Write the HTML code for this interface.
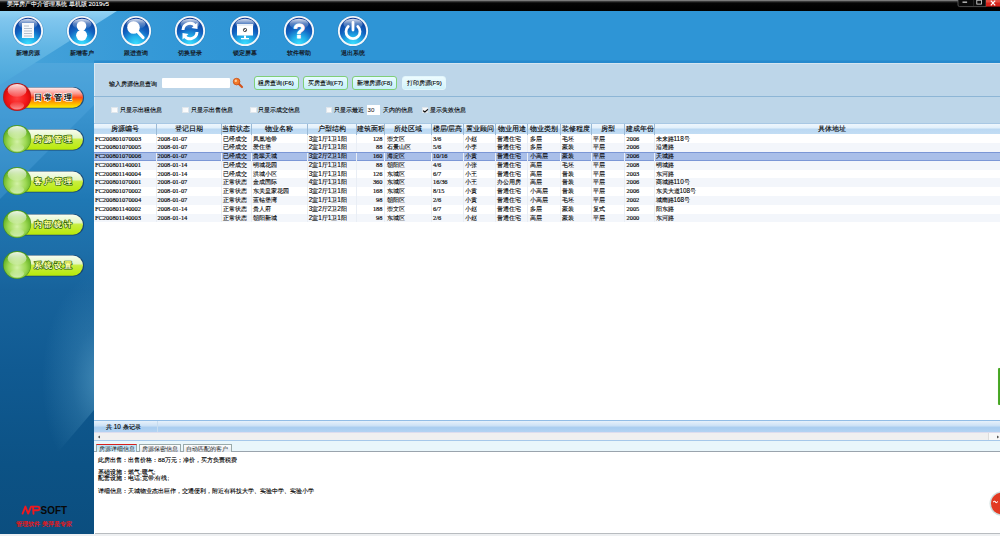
<!DOCTYPE html>
<html><head><meta charset="utf-8">
<style>
*{margin:0;padding:0;box-sizing:border-box}
html,body{width:1000px;height:536px;overflow:hidden;background:#fff;font-family:"Liberation Sans",sans-serif;}
.abs{position:absolute}
#bg{left:0;top:0}
#title{left:0;top:0;width:1000px;height:10.6px;background:linear-gradient(#9a9a9a 0,#3a3a3a 1.5px,#050505 3px,#000 100%);}
#title .t{left:7px;top:0px;font-size:6.25px;color:#fff;white-space:nowrap;line-height:7px;-webkit-text-stroke:0.1px #fff}
.ico{position:absolute;top:15.3px;width:32px;height:32px}
.lbl{position:absolute;top:49px;width:60px;text-align:center;font-size:6.2px;line-height:7px;color:#14202c;font-weight:bold;white-space:nowrap}
#main{left:94px;top:63px;width:906px;height:473px;background:#fff;overflow:hidden}
#panel{left:0;top:0;width:906px;height:61px;background:#bdd6e9;border-left:1px solid #d9e8f3;border-top:1px solid #d4e4f0}
#sep{left:0;top:33px;width:906px;height:1px;background:#8db6d6}
.txt{position:absolute;font-size:6.3px;line-height:8px;color:#000;white-space:nowrap;-webkit-text-stroke:0.12px #000}
#q{left:67.6px;top:15px;width:68px;height:9.6px;background:#fff;border-radius:1px}
.btn{position:absolute;top:13px;height:13.6px;border:1.3px solid #7fcf78;border-radius:3px;background:linear-gradient(#e8fcff,#c6eff9);font-size:6.2px;line-height:11px;text-align:center;color:#000;white-space:nowrap;-webkit-text-stroke:0.1px #000}
.btn.nb{border-color:#e2f6fb;background:linear-gradient(#eefcff,#cff2fa)}
.cb{position:absolute;top:43.8px;width:6.6px;height:6.6px;background:linear-gradient(135deg,#f4f6f8,#fff);border:0.6px solid #dfe6ec}
#n30{left:272.6px;top:42px;width:13.4px;height:10px;background:#fff;font-size:6.2px;line-height:10px;padding-left:1px;color:#111}
#thead{left:0;top:60.4px;width:906px;height:11.1px;background:linear-gradient(#eef6fd 0,#e2f0fb 38%,#bcd9f3 52%,#c2ddf4 100%);border-top:0.5px solid #a8c8e4}
.th{position:absolute;top:0;height:10.8px;font-size:6.5px;line-height:10px;text-align:center;color:#000;-webkit-text-stroke:0.12px #000;border-right:1px solid #9bbad6;white-space:nowrap;overflow:hidden}
.tr{position:absolute;left:0;width:906px;height:8.78px}
.tr.alt{background:#f3f6fb}
.tr.sel{background:#a9bfe9;border-top:1px solid #7b97d6;border-bottom:1px solid #7b97d6}
.td{position:absolute;top:0;height:8.78px;border-right:0.6px solid #e9eef5;font-family:"Liberation Serif",serif;font-size:6.4px;line-height:8.78px;padding-left:1px;color:#000;white-space:nowrap;overflow:hidden;-webkit-text-stroke:0.15px #000}
.tr.sel .td{line-height:6.78px}
.td.cj{font-family:"Liberation Sans",sans-serif;font-size:6.4px;-webkit-text-stroke:0.1px #000}
.td.r{text-align:right;padding-right:2px}
#status{left:0;top:357px;width:906px;height:12px;background:linear-gradient(#e6f1fb 0,#cfe3f6 40%,#a9cdf0 60%,#b3d3f2 100%);border-top:1px solid #92bde6}
#scroll{left:0;top:369px;width:906px;height:8px;background:#f0f0f0;border-top:0.5px solid #dde;}
#tabs{left:0;top:377px;width:906px;height:12.4px;background:#e9f6fb;border-top:1px solid #a6c8ea;border-bottom:1.2px solid #9aa4ad}
.tab{position:absolute;top:3px;height:8.4px;background:linear-gradient(#fdfdfd,#e2e8ee);border:0.6px solid #9aa;border-bottom:none;font-size:6.3px;line-height:8px;padding-left:1.5px;color:#111;white-space:nowrap}
#detail{left:1px;top:389.4px;width:905px;height:81.4px;background:#fff;border-bottom:1.4px solid #b8bcc0}
.dl{position:absolute;left:3px;font-size:6.25px;line-height:7px;color:#000;white-space:nowrap;-webkit-text-stroke:0.12px #000}
</style></head><body>
<svg id="bg" class="abs" width="1000" height="536" viewBox="0 0 1000 536">
  <defs>
    <radialGradient id="icog" cx="0.5" cy="1.0" r="1.0">
      <stop offset="0" stop-color="#3ee0ff"/><stop offset="0.3" stop-color="#22b0ea"/><stop offset="0.6" stop-color="#1262c0"/><stop offset="1" stop-color="#0a3590"/>
    </radialGradient>
    <linearGradient id="gloss" x1="0" y1="0" x2="0" y2="1">
      <stop offset="0" stop-color="#fff" stop-opacity=".85"/><stop offset="0.45" stop-color="#fff" stop-opacity=".35"/><stop offset="1" stop-color="#fff" stop-opacity="0.02"/>
    </linearGradient>
    <linearGradient id="glossB" x1="0" y1="0" x2="0" y2="1">
      <stop offset="0" stop-color="#fff" stop-opacity=".9"/><stop offset="1" stop-color="#fff" stop-opacity="0.15"/>
    </linearGradient>
    <linearGradient id="glossU" x1="0" y1="0" x2="0" y2="1">
      <stop offset="0" stop-color="#fff" stop-opacity="0"/><stop offset="1" stop-color="#fff" stop-opacity="0.55"/>
    </linearGradient>
    <linearGradient id="pillR" x1="0" y1="0" x2="0" y2="1">
      <stop offset="0" stop-color="#fff0f0"/><stop offset="0.3" stop-color="#fb9a90"/><stop offset="0.5" stop-color="#ff4a18"/><stop offset="0.7" stop-color="#ff9a00"/><stop offset="1" stop-color="#fff000"/>
    </linearGradient>
    <linearGradient id="pillG" x1="0" y1="0" x2="0" y2="1">
      <stop offset="0" stop-color="#f8fdf0"/><stop offset="0.4" stop-color="#e4f6c4"/><stop offset="0.5" stop-color="#c8ee40"/><stop offset="1" stop-color="#b8ea08"/>
    </linearGradient>
    <radialGradient id="ballR" cx="0.5" cy="0.55" r="0.55">
      <stop offset="0" stop-color="#ff4040"/><stop offset="0.7" stop-color="#f01414"/><stop offset="1" stop-color="#c80a0a"/>
    </radialGradient>
    <radialGradient id="ballG" cx="0.5" cy="0.6" r="0.55">
      <stop offset="0" stop-color="#d4f2a8"/><stop offset="0.6" stop-color="#9cd852"/><stop offset="1" stop-color="#62b022"/>
    </radialGradient>
    <linearGradient id="sideg" gradientUnits="userSpaceOnUse" x1="0" y1="63" x2="0" y2="536">
      <stop offset="0" stop-color="#4aa3d8"/>
      <stop offset="0.1" stop-color="#3a94cf"/>
      <stop offset="0.29" stop-color="#1f78b4"/>
      <stop offset="0.4" stop-color="#1d6ea8"/>
      <stop offset="0.48" stop-color="#17639c"/>
      <stop offset="0.65" stop-color="#105a92"/>
      <stop offset="0.85" stop-color="#0c5285"/>
      <stop offset="1" stop-color="#0b4e7f"/>
    </linearGradient>
    <linearGradient id="hdrh" gradientUnits="userSpaceOnUse" x1="0" y1="0" x2="300" y2="0">
      <stop offset="0" stop-color="#4aa5da"/><stop offset="1" stop-color="#2e95d6" stop-opacity="0"/>
    </linearGradient>
    <radialGradient id="glow" gradientUnits="userSpaceOnUse" cx="102" cy="380" r="80" gradientTransform="translate(102 380) scale(0.75 1.35) translate(-102 -380)">
      <stop offset="0" stop-color="#6ab0d4" stop-opacity=".55"/><stop offset="0.5" stop-color="#6ab0d4" stop-opacity=".2"/><stop offset="1" stop-color="#6ab0d4" stop-opacity="0"/>
    </radialGradient>
    <linearGradient id="txtG" x1="0" y1="0" x2="0" y2="1">
      <stop offset="0" stop-color="#ffff60"/><stop offset="1" stop-color="#ffffff"/>
    </linearGradient>
    <linearGradient id="triA" gradientUnits="userSpaceOnUse" x1="0" y1="10" x2="0" y2="85">
      <stop offset="0" stop-color="#94d4f4"/><stop offset="0.12" stop-color="#80c6ee"/><stop offset="0.5" stop-color="#62b6e4"/><stop offset="1" stop-color="#4aa6da"/>
    </linearGradient>
  </defs>
  <rect x="0" y="10" width="1000" height="53" fill="#2e95d6"/>
  <rect x="0" y="10" width="300" height="53" fill="url(#hdrh)"/>
  <rect x="94" y="60.5" width="906" height="2.5" fill="#1f7fc6" opacity=".55"/>
  <rect x="0" y="534" width="94" height="2" fill="#eef0f2"/>
  <rect x="0" y="63" width="94" height="471" fill="url(#sideg)"/>
  <polygon points="0,63 136,63 0,199" fill="#5fb0e6" opacity="0.28"/>
  <polygon points="94,230 94,410 0,520 0,230" fill="url(#glow)"/>
  <polygon points="0,10 118.5,10 0,85" fill="url(#triA)"/>
</svg>
<div id="title" class="abs"><div class="t abs">美萍房产中介管理系统 单机版 2019v5</div>
  <svg class="abs" style="left:957px;top:0" width="43" height="8" viewBox="0 0 43 8">
    <path d="M1 0 V5 Q1 6.6 2.6 6.6 H29 V0" fill="#0a0a0a" stroke="#6a6a6a" stroke-width="0.7"/>
    <line x1="16.6" y1="0" x2="16.6" y2="6.4" stroke="#444" stroke-width="0.5"/>
    <rect x="5.5" y="1.6" width="4.6" height="1.1" fill="#f0f0f0"/>
    <rect x="19.8" y="0.2" width="4.6" height="3.9" fill="none" stroke="#e8e8e8" stroke-width="0.8"/>
    <path d="M29 0 H43 V6.6 H29Z" fill="#d8241c"/>
    <path d="M29 0 H43 V2.5 H29Z" fill="#ee6a5a" opacity=".6"/>
    <path d="M33.8 0.6 L38.2 5.4 M38.2 0.6 L33.8 5.4" stroke="#fff" stroke-width="1.2"/>
  </svg>
</div>

<!-- header icons -->
<svg class="ico" style="left:12.3px" viewBox="0 0 32 32"><circle cx="16" cy="16" r="15.6" fill="#1b6aa8" opacity=".5"/><circle cx="16" cy="16" r="15.1" fill="#f2f6fa"/><circle cx="16" cy="16" r="13.2" fill="url(#icog)"/><ellipse cx="16" cy="9" rx="9.6" ry="5.2" fill="url(#gloss)"/><rect x="10" y="8" width="12" height="15" fill="#f6f8fb"/><g stroke="#9aa8b8" stroke-width="0.7"><line x1="12" y1="11" x2="17" y2="11"/><line x1="12" y1="13.5" x2="20" y2="13.5"/><line x1="12" y1="16" x2="20" y2="16"/><line x1="12" y1="18.5" x2="20" y2="18.5"/><line x1="12" y1="21" x2="20" y2="21"/></g></svg>
<div class="lbl" style="left:-1.7px">新增房源</div>
<svg class="ico" style="left:66.3px" viewBox="0 0 32 32"><circle cx="16" cy="16" r="15.6" fill="#1b6aa8" opacity=".5"/><circle cx="16" cy="16" r="15.1" fill="#f2f6fa"/><circle cx="16" cy="16" r="13.2" fill="url(#icog)"/><ellipse cx="16" cy="9" rx="9.6" ry="5.2" fill="url(#gloss)"/><circle cx="15.5" cy="11" r="4.8" fill="#fff"/><circle cx="15.6" cy="20.3" r="5.5" fill="#fff"/></svg>
<div class="lbl" style="left:52.3px">新增客户</div>
<svg class="ico" style="left:120.3px" viewBox="0 0 32 32"><circle cx="16" cy="16" r="15.6" fill="#1b6aa8" opacity=".5"/><circle cx="16" cy="16" r="15.1" fill="#f2f6fa"/><circle cx="16" cy="16" r="13.2" fill="url(#icog)"/><ellipse cx="16" cy="9" rx="9.6" ry="5.2" fill="url(#gloss)"/><circle cx="13.5" cy="12.5" r="6.3" fill="#fff"/><line x1="17" y1="16" x2="23" y2="22.5" stroke="#fff" stroke-width="3.2" stroke-linecap="round"/></svg>
<div class="lbl" style="left:106.3px">跟进查询</div>
<svg class="ico" style="left:174.3px" viewBox="0 0 32 32"><circle cx="16" cy="16" r="15.6" fill="#1b6aa8" opacity=".5"/><circle cx="16" cy="16" r="15.1" fill="#f2f6fa"/><circle cx="16" cy="16" r="13.2" fill="url(#icog)"/><ellipse cx="16" cy="9" rx="9.6" ry="5.2" fill="url(#gloss)"/><path d="M9 15 A7 7 0 0 1 21.5 11" stroke="#fff" stroke-width="3" fill="none"/><path d="M23.5 7.5 L23.5 14 L17.5 13Z" fill="#fff"/><path d="M23 17 A7 7 0 0 1 10.5 21" stroke="#fff" stroke-width="3" fill="none"/><path d="M8.5 24.5 L8.5 18 L14.5 19Z" fill="#fff"/></svg>
<div class="lbl" style="left:160.3px">切换登录</div>
<svg class="ico" style="left:228.8px" viewBox="0 0 32 32"><circle cx="16" cy="16" r="15.6" fill="#1b6aa8" opacity=".5"/><circle cx="16" cy="16" r="15.1" fill="#f2f6fa"/><circle cx="16" cy="16" r="13.2" fill="url(#icog)"/><ellipse cx="16" cy="9" rx="9.6" ry="5.2" fill="url(#gloss)"/><rect x="8" y="9" width="16" height="11.5" fill="#fff"/><rect x="8" y="9" width="16" height="2" fill="#e8eef5"/><circle cx="16" cy="15" r="1.7" fill="none" stroke="#333" stroke-width="0.8"/><line x1="15" y1="14" x2="17" y2="16" stroke="#333" stroke-width="0.6"/><rect x="15" y="20.5" width="2" height="2.5" fill="#fff"/><rect x="12" y="23" width="8" height="1.3" fill="#fff"/></svg>
<div class="lbl" style="left:214.8px">锁定屏幕</div>
<svg class="ico" style="left:282.6px" viewBox="0 0 32 32"><circle cx="16" cy="16" r="15.6" fill="#1b6aa8" opacity=".5"/><circle cx="16" cy="16" r="15.1" fill="#f2f6fa"/><circle cx="16" cy="16" r="13.2" fill="url(#icog)"/><ellipse cx="16" cy="9" rx="9.6" ry="5.2" fill="url(#gloss)"/><text x="16" y="22.9" text-anchor="middle" font-family="Liberation Sans" font-weight="bold" font-size="20" fill="#fff" stroke="#fff" stroke-width="0.8">?</text></svg>
<div class="lbl" style="left:268.6px">软件帮助</div>
<svg class="ico" style="left:336.8px" viewBox="0 0 32 32"><circle cx="16" cy="16" r="15.6" fill="#1b6aa8" opacity=".5"/><circle cx="16" cy="16" r="15.1" fill="#f2f6fa"/><circle cx="16" cy="16" r="13.2" fill="url(#icog)"/><ellipse cx="16" cy="9" rx="9.6" ry="5.2" fill="url(#gloss)"/><path d="M11.2 11.5 A7 7 0 1 0 20.8 11.5" stroke="#fff" stroke-width="2.8" fill="none" stroke-linecap="round"/><line x1="16" y1="7.5" x2="16" y2="15" stroke="#fff" stroke-width="2.8" stroke-linecap="round"/></svg>
<div class="lbl" style="left:322.8px">退出系统</div>

<!-- sidebar buttons -->
<svg class="abs" style="left:0;top:81.2px" width="94" height="32" viewBox="0 0 94 32"><rect x="15" y="5.9" width="69" height="21.6" rx="10.8" fill="#173e66" opacity=".85"/><rect x="15.5" y="6.4" width="67.5" height="20.4" rx="10.2" fill="url(#pillR)"/><circle cx="17.1" cy="16" r="14.1" fill="#a01010" opacity=".8"/><circle cx="17.1" cy="16" r="13.5" fill="url(#ballR)"/><ellipse cx="17.1" cy="9.4" rx="9.4" ry="6.4" fill="url(#glossB)"/><ellipse cx="17.1" cy="24.5" rx="7" ry="4" fill="url(#glossU)"/><text x="54.2" y="19.2" text-anchor="middle" font-family="Liberation Sans" font-weight="bold" font-size="8" letter-spacing="2.1" fill="#111" stroke="#fff" stroke-width="1.4" paint-order="stroke" stroke-linejoin="round">日常管理</text></svg>
<svg class="abs" style="left:0;top:123.1px" width="94" height="32" viewBox="0 0 94 32"><rect x="15" y="5.9" width="69" height="21.6" rx="10.8" fill="#173e66" opacity=".85"/><rect x="15.5" y="6.4" width="67.5" height="20.4" rx="10.2" fill="url(#pillG)"/><circle cx="17.1" cy="16" r="14.1" fill="#3d8a12" opacity=".8"/><circle cx="17.1" cy="16" r="13.5" fill="url(#ballG)"/><ellipse cx="17.1" cy="9.4" rx="9.4" ry="6.4" fill="url(#glossB)"/><ellipse cx="17.1" cy="24.5" rx="7" ry="4" fill="url(#glossU)"/><text x="54.2" y="19.2" text-anchor="middle" font-family="Liberation Sans" font-weight="bold" font-size="8" letter-spacing="2.1" fill="url(#txtG)" stroke="#245e08" stroke-width="1.4" paint-order="stroke" stroke-linejoin="round">房源管理</text></svg>
<svg class="abs" style="left:0;top:165.0px" width="94" height="32" viewBox="0 0 94 32"><rect x="15" y="5.9" width="69" height="21.6" rx="10.8" fill="#173e66" opacity=".85"/><rect x="15.5" y="6.4" width="67.5" height="20.4" rx="10.2" fill="url(#pillG)"/><circle cx="17.1" cy="16" r="14.1" fill="#3d8a12" opacity=".8"/><circle cx="17.1" cy="16" r="13.5" fill="url(#ballG)"/><ellipse cx="17.1" cy="9.4" rx="9.4" ry="6.4" fill="url(#glossB)"/><ellipse cx="17.1" cy="24.5" rx="7" ry="4" fill="url(#glossU)"/><text x="54.2" y="19.2" text-anchor="middle" font-family="Liberation Sans" font-weight="bold" font-size="8" letter-spacing="2.1" fill="url(#txtG)" stroke="#245e08" stroke-width="1.4" paint-order="stroke" stroke-linejoin="round">客户管理</text></svg>
<svg class="abs" style="left:0;top:207.5px" width="94" height="32" viewBox="0 0 94 32"><rect x="15" y="5.9" width="69" height="21.6" rx="10.8" fill="#173e66" opacity=".85"/><rect x="15.5" y="6.4" width="67.5" height="20.4" rx="10.2" fill="url(#pillG)"/><circle cx="17.1" cy="16" r="14.1" fill="#3d8a12" opacity=".8"/><circle cx="17.1" cy="16" r="13.5" fill="url(#ballG)"/><ellipse cx="17.1" cy="9.4" rx="9.4" ry="6.4" fill="url(#glossB)"/><ellipse cx="17.1" cy="24.5" rx="7" ry="4" fill="url(#glossU)"/><text x="54.2" y="19.2" text-anchor="middle" font-family="Liberation Sans" font-weight="bold" font-size="8" letter-spacing="2.1" fill="url(#txtG)" stroke="#245e08" stroke-width="1.4" paint-order="stroke" stroke-linejoin="round">内部统计</text></svg>
<svg class="abs" style="left:0;top:248.8px" width="94" height="32" viewBox="0 0 94 32"><rect x="15" y="5.9" width="69" height="21.6" rx="10.8" fill="#173e66" opacity=".85"/><rect x="15.5" y="6.4" width="67.5" height="20.4" rx="10.2" fill="url(#pillG)"/><circle cx="17.1" cy="16" r="14.1" fill="#3d8a12" opacity=".8"/><circle cx="17.1" cy="16" r="13.5" fill="url(#ballG)"/><ellipse cx="17.1" cy="9.4" rx="9.4" ry="6.4" fill="url(#glossB)"/><ellipse cx="17.1" cy="24.5" rx="7" ry="4" fill="url(#glossU)"/><text x="54.2" y="19.2" text-anchor="middle" font-family="Liberation Sans" font-weight="bold" font-size="8" letter-spacing="2.1" fill="url(#txtG)" stroke="#245e08" stroke-width="1.4" paint-order="stroke" stroke-linejoin="round">系统设置</text></svg>

<div id="main" class="abs">
  <div id="panel" class="abs"></div>
  <div id="sep" class="abs"></div>
  <div class="txt" style="left:15px;top:17px">输入房源信息查询</div>
  <div id="q" class="abs"></div>
  <svg class="abs" style="left:138px;top:14px" width="12" height="12" viewBox="0 0 12 12">
    <line x1="5" y1="5" x2="10" y2="10" stroke="#d2531c" stroke-width="2.2" stroke-linecap="round"/>
    <circle cx="4.6" cy="4.6" r="3.3" fill="#f27a2a" stroke="#c84a10" stroke-width="0.8"/>
    <circle cx="3.8" cy="3.8" r="1.2" fill="#ffd0a0"/>
  </svg>
  <div class="btn" style="left:159.6px;width:45px">租房查询(F6)</div>
  <div class="btn" style="left:209px;width:45px">买房查询(F7)</div>
  <div class="btn" style="left:258px;width:45.4px">新增房源(F8)</div>
  <div class="btn nb" style="left:308px;width:44.4px">打印房源(F9)</div>

  <div class="cb" style="left:17px"></div><div class="txt" style="left:26px;top:43px">只显示出租信息</div>
  <div class="cb" style="left:88px"></div><div class="txt" style="left:97px;top:43px">只显示出售信息</div>
  <div class="cb" style="left:156px"></div><div class="txt" style="left:164.4px;top:43px">只显示成交信息</div>
  <div class="cb" style="left:231.6px"></div><div class="txt" style="left:240px;top:43px">只显示最近</div>
  <div id="n30" class="abs">30</div>
  <div class="txt" style="left:289px;top:43px">天内的信息</div>
  <div class="cb" style="left:327.6px"></div>
  <svg class="abs" style="left:327.6px;top:43.5px" width="7" height="7" viewBox="0 0 7 7"><path d="M1.5 3.9 L2.9 5 L5.6 2.6" stroke="#111" stroke-width="1.25" fill="none" stroke-linecap="round"/></svg>
  <div class="txt" style="left:336px;top:43px">显示失效信息</div>

  <div id="thead" class="abs">
<div class="th" style="left:0.0px;width:62.5px">房源编号</div>
<div class="th" style="left:62.5px;width:65.0px">登记日期</div>
<div class="th" style="left:127.5px;width:30.5px">当前状态</div>
<div class="th" style="left:158.0px;width:55.7px">物业名称</div>
<div class="th" style="left:213.7px;width:49.5px">户型结构</div>
<div class="th" style="left:263.2px;width:28.3px">建筑面积</div>
<div class="th" style="left:291.5px;width:46.5px">所处区域</div>
<div class="th" style="left:338.0px;width:32.0px">楼层/层高</div>
<div class="th" style="left:370.0px;width:32.4px">置业顾问</div>
<div class="th" style="left:402.4px;width:32.1px">物业用途</div>
<div class="th" style="left:434.5px;width:32.2px">物业类别</div>
<div class="th" style="left:466.7px;width:31.5px">装修程度</div>
<div class="th" style="left:498.2px;width:33.3px">房型</div>
<div class="th" style="left:531.5px;width:29.0px">建成年份</div>
<div class="th" style="left:560.5px;width:355.5px">具体地址</div>
  </div>
  <div id="tbody">
<div class="tr" style="top:71.50px">
<div class="td" style="left:0.0px;width:62.5px">FC200801070003</div>
<div class="td" style="left:62.5px;width:65.0px">2008-01-07</div>
<div class="td cj" style="left:127.5px;width:30.5px">已经成交</div>
<div class="td cj" style="left:158.0px;width:55.7px">凤凰地带</div>
<div class="td cj" style="left:213.7px;width:49.5px">3室1厅1卫1阳</div>
<div class="td r" style="left:263.2px;width:28.3px">128</div>
<div class="td cj" style="left:291.5px;width:46.5px">崇文区</div>
<div class="td" style="left:338.0px;width:32.0px">3/6</div>
<div class="td cj" style="left:370.0px;width:32.4px">小赵</div>
<div class="td cj" style="left:402.4px;width:32.1px">普通住宅</div>
<div class="td cj" style="left:434.5px;width:32.2px">多层</div>
<div class="td cj" style="left:466.7px;width:31.5px">毛坯</div>
<div class="td cj" style="left:498.2px;width:33.3px">平层</div>
<div class="td" style="left:531.5px;width:29.0px">2006</div>
<div class="td cj" style="left:560.5px;width:355.5px">未来路118号</div>
</div>
<div class="tr alt" style="top:80.28px">
<div class="td" style="left:0.0px;width:62.5px">FC200801070005</div>
<div class="td" style="left:62.5px;width:65.0px">2008-01-07</div>
<div class="td cj" style="left:127.5px;width:30.5px">已经成交</div>
<div class="td cj" style="left:158.0px;width:55.7px">爱住堡</div>
<div class="td cj" style="left:213.7px;width:49.5px">2室1厅1卫1阳</div>
<div class="td r" style="left:263.2px;width:28.3px">88</div>
<div class="td cj" style="left:291.5px;width:46.5px">石景山区</div>
<div class="td" style="left:338.0px;width:32.0px">5/6</div>
<div class="td cj" style="left:370.0px;width:32.4px">小李</div>
<div class="td cj" style="left:402.4px;width:32.1px">普通住宅</div>
<div class="td cj" style="left:434.5px;width:32.2px">多层</div>
<div class="td cj" style="left:466.7px;width:31.5px">豪装</div>
<div class="td cj" style="left:498.2px;width:33.3px">平层</div>
<div class="td" style="left:531.5px;width:29.0px">2006</div>
<div class="td cj" style="left:560.5px;width:355.5px">沿通路</div>
</div>
<div class="tr sel" style="top:89.06px">
<div class="td" style="left:0.0px;width:62.5px">FC200801070006</div>
<div class="td" style="left:62.5px;width:65.0px">2008-01-07</div>
<div class="td cj" style="left:127.5px;width:30.5px">已经成交</div>
<div class="td cj" style="left:158.0px;width:55.7px">贵翠天城</div>
<div class="td cj" style="left:213.7px;width:49.5px">3室2厅2卫1阳</div>
<div class="td r" style="left:263.2px;width:28.3px">160</div>
<div class="td cj" style="left:291.5px;width:46.5px">海淀区</div>
<div class="td" style="left:338.0px;width:32.0px">10/16</div>
<div class="td cj" style="left:370.0px;width:32.4px">小黄</div>
<div class="td cj" style="left:402.4px;width:32.1px">普通住宅</div>
<div class="td cj" style="left:434.5px;width:32.2px">小高层</div>
<div class="td cj" style="left:466.7px;width:31.5px">豪装</div>
<div class="td cj" style="left:498.2px;width:33.3px">平层</div>
<div class="td" style="left:531.5px;width:29.0px">2006</div>
<div class="td cj" style="left:560.5px;width:355.5px">天城路</div>
</div>
<div class="tr alt" style="top:97.84px">
<div class="td" style="left:0.0px;width:62.5px">FC200801140001</div>
<div class="td" style="left:62.5px;width:65.0px">2008-01-14</div>
<div class="td cj" style="left:127.5px;width:30.5px">已经成交</div>
<div class="td cj" style="left:158.0px;width:55.7px">明城花园</div>
<div class="td cj" style="left:213.7px;width:49.5px">2室1厅1卫1阳</div>
<div class="td r" style="left:263.2px;width:28.3px">88</div>
<div class="td cj" style="left:291.5px;width:46.5px">朝阳区</div>
<div class="td" style="left:338.0px;width:32.0px">4/6</div>
<div class="td cj" style="left:370.0px;width:32.4px">小张</div>
<div class="td cj" style="left:402.4px;width:32.1px">普通住宅</div>
<div class="td cj" style="left:434.5px;width:32.2px">高层</div>
<div class="td cj" style="left:466.7px;width:31.5px">毛坯</div>
<div class="td cj" style="left:498.2px;width:33.3px">平层</div>
<div class="td" style="left:531.5px;width:29.0px">2008</div>
<div class="td cj" style="left:560.5px;width:355.5px">明城路</div>
</div>
<div class="tr" style="top:106.62px">
<div class="td" style="left:0.0px;width:62.5px">FC200801140004</div>
<div class="td" style="left:62.5px;width:65.0px">2008-01-14</div>
<div class="td cj" style="left:127.5px;width:30.5px">已经成交</div>
<div class="td cj" style="left:158.0px;width:55.7px">洪城小区</div>
<div class="td cj" style="left:213.7px;width:49.5px">3室1厅1卫1阳</div>
<div class="td r" style="left:263.2px;width:28.3px">126</div>
<div class="td cj" style="left:291.5px;width:46.5px">东城区</div>
<div class="td" style="left:338.0px;width:32.0px">6/7</div>
<div class="td cj" style="left:370.0px;width:32.4px">小王</div>
<div class="td cj" style="left:402.4px;width:32.1px">普通住宅</div>
<div class="td cj" style="left:434.5px;width:32.2px">高层</div>
<div class="td cj" style="left:466.7px;width:31.5px">普装</div>
<div class="td cj" style="left:498.2px;width:33.3px">平层</div>
<div class="td" style="left:531.5px;width:29.0px">2003</div>
<div class="td cj" style="left:560.5px;width:355.5px">东河路</div>
</div>
<div class="tr alt" style="top:115.40px">
<div class="td" style="left:0.0px;width:62.5px">FC200801070001</div>
<div class="td" style="left:62.5px;width:65.0px">2008-01-07</div>
<div class="td cj" style="left:127.5px;width:30.5px">正常状态</div>
<div class="td cj" style="left:158.0px;width:55.7px">金成国际</div>
<div class="td cj" style="left:213.7px;width:49.5px">4室1厅1卫1阳</div>
<div class="td r" style="left:263.2px;width:28.3px">360</div>
<div class="td cj" style="left:291.5px;width:46.5px">东城区</div>
<div class="td" style="left:338.0px;width:32.0px">16/36</div>
<div class="td cj" style="left:370.0px;width:32.4px">小王</div>
<div class="td cj" style="left:402.4px;width:32.1px">办公用房</div>
<div class="td cj" style="left:434.5px;width:32.2px">高层</div>
<div class="td cj" style="left:466.7px;width:31.5px">普装</div>
<div class="td cj" style="left:498.2px;width:33.3px">平层</div>
<div class="td" style="left:531.5px;width:29.0px">2006</div>
<div class="td cj" style="left:560.5px;width:355.5px">商城路110号</div>
</div>
<div class="tr" style="top:124.18px">
<div class="td" style="left:0.0px;width:62.5px">FC200801070002</div>
<div class="td" style="left:62.5px;width:65.0px">2008-01-07</div>
<div class="td cj" style="left:127.5px;width:30.5px">正常状态</div>
<div class="td cj" style="left:158.0px;width:55.7px">东关皇家花园</div>
<div class="td cj" style="left:213.7px;width:49.5px">3室2厅1卫1阳</div>
<div class="td r" style="left:263.2px;width:28.3px">168</div>
<div class="td cj" style="left:291.5px;width:46.5px">东城区</div>
<div class="td" style="left:338.0px;width:32.0px">8/15</div>
<div class="td cj" style="left:370.0px;width:32.4px">小黄</div>
<div class="td cj" style="left:402.4px;width:32.1px">普通住宅</div>
<div class="td cj" style="left:434.5px;width:32.2px">小高层</div>
<div class="td cj" style="left:466.7px;width:31.5px">普装</div>
<div class="td cj" style="left:498.2px;width:33.3px">平层</div>
<div class="td" style="left:531.5px;width:29.0px">2006</div>
<div class="td cj" style="left:560.5px;width:355.5px">东关大道108号</div>
</div>
<div class="tr alt" style="top:132.96px">
<div class="td" style="left:0.0px;width:62.5px">FC200801070004</div>
<div class="td" style="left:62.5px;width:65.0px">2008-01-07</div>
<div class="td cj" style="left:127.5px;width:30.5px">正常状态</div>
<div class="td cj" style="left:158.0px;width:55.7px">蓝钻堡湾</div>
<div class="td cj" style="left:213.7px;width:49.5px">2室1厅1卫1阳</div>
<div class="td r" style="left:263.2px;width:28.3px">98</div>
<div class="td cj" style="left:291.5px;width:46.5px">朝阳区</div>
<div class="td" style="left:338.0px;width:32.0px">2/6</div>
<div class="td cj" style="left:370.0px;width:32.4px">小黄</div>
<div class="td cj" style="left:402.4px;width:32.1px">普通住宅</div>
<div class="td cj" style="left:434.5px;width:32.2px">小高层</div>
<div class="td cj" style="left:466.7px;width:31.5px">毛坯</div>
<div class="td cj" style="left:498.2px;width:33.3px">平层</div>
<div class="td" style="left:531.5px;width:29.0px">2002</div>
<div class="td cj" style="left:560.5px;width:355.5px">城南路168号</div>
</div>
<div class="tr" style="top:141.74px">
<div class="td" style="left:0.0px;width:62.5px">FC200801140002</div>
<div class="td" style="left:62.5px;width:65.0px">2008-01-14</div>
<div class="td cj" style="left:127.5px;width:30.5px">正常状态</div>
<div class="td cj" style="left:158.0px;width:55.7px">贵人府</div>
<div class="td cj" style="left:213.7px;width:49.5px">3室2厅2卫2阳</div>
<div class="td r" style="left:263.2px;width:28.3px">188</div>
<div class="td cj" style="left:291.5px;width:46.5px">崇文区</div>
<div class="td" style="left:338.0px;width:32.0px">6/7</div>
<div class="td cj" style="left:370.0px;width:32.4px">小赵</div>
<div class="td cj" style="left:402.4px;width:32.1px">普通住宅</div>
<div class="td cj" style="left:434.5px;width:32.2px">多层</div>
<div class="td cj" style="left:466.7px;width:31.5px">豪装</div>
<div class="td cj" style="left:498.2px;width:33.3px">复式</div>
<div class="td" style="left:531.5px;width:29.0px">2005</div>
<div class="td cj" style="left:560.5px;width:355.5px">阳东路</div>
</div>
<div class="tr alt" style="top:150.52px">
<div class="td" style="left:0.0px;width:62.5px">FC200801140003</div>
<div class="td" style="left:62.5px;width:65.0px">2008-01-14</div>
<div class="td cj" style="left:127.5px;width:30.5px">正常状态</div>
<div class="td cj" style="left:158.0px;width:55.7px">朝阳新城</div>
<div class="td cj" style="left:213.7px;width:49.5px">2室1厅1卫1阳</div>
<div class="td r" style="left:263.2px;width:28.3px">98</div>
<div class="td cj" style="left:291.5px;width:46.5px">东城区</div>
<div class="td" style="left:338.0px;width:32.0px">2/6</div>
<div class="td cj" style="left:370.0px;width:32.4px">小赵</div>
<div class="td cj" style="left:402.4px;width:32.1px">普通住宅</div>
<div class="td cj" style="left:434.5px;width:32.2px">高层</div>
<div class="td cj" style="left:466.7px;width:31.5px">豪装</div>
<div class="td cj" style="left:498.2px;width:33.3px">平层</div>
<div class="td" style="left:531.5px;width:29.0px">2000</div>
<div class="td cj" style="left:560.5px;width:355.5px">东河路</div>
</div>
  </div>

  <div id="status" class="abs">
    <div class="abs" style="left:62.5px;top:0;width:1px;height:11px;background:#c8ddf0"></div>
    <div class="txt" style="left:12px;top:1.5px">共 10 条记录</div>
  </div>
  <div id="scroll" class="abs">
    <svg class="abs" style="left:3px;top:2px" width="4" height="4"><path d="M3 0.5 L0.8 2 L3 3.5Z" fill="#555"/></svg>
    <div class="abs" style="left:893.5px;top:0;width:12.5px;height:8px;background:#f8f8f8;border-left:0.5px solid #ddd"></div>
    <svg class="abs" style="left:902px;top:2px" width="4" height="4"><path d="M1 0.5 L3.2 2 L1 3.5Z" fill="#555"/></svg>
  </div>
  <div id="tabs" class="abs">
    <div class="tab" style="left:2px;width:41px;background:linear-gradient(#bfe3f7,#d9f0fb);border-top:1.2px solid #d8201c">房源详细信息</div>
    <div class="tab" style="left:45px;width:42px">房源保密信息</div>
    <div class="tab" style="left:89px;width:49px">自动匹配的客户</div>
  </div>
  <div id="detail" class="abs">
    <div class="dl" style="top:3.5px">此房出售：出售价格：88万元；净价，买方负责税费</div>
    <div class="dl" style="top:15.3px">基础设施：燃气;暖气;</div>
    <div class="dl" style="top:22px">配套设施：电话;宽带;有线;</div>
    <div class="dl" style="top:34.6px">详细信息：天城物业杰出巨作，交通便利，附近有科技大学、实验中学、实验小学</div>
  </div>
  <div class="abs" style="left:0;top:470.8px;width:906px;height:3px;background:#eef0f2"></div>
</div>

<!-- right floating widgets -->
<div class="abs" style="left:997.5px;top:367.8px;width:3px;height:37.6px;background:linear-gradient(90deg,#4fae2a,#3c9a1e);border-radius:1px 0 0 1px;box-shadow:0 0 1px #cfe8c8"></div>
<svg class="abs" style="left:988px;top:490px" width="12" height="27" viewBox="0 0 12 27">
  <circle cx="14" cy="13.5" r="12.5" fill="#cfdfe0"/>
  <circle cx="14" cy="13.5" r="11" fill="#e23a22"/>
  <path d="M5 12 l2 -1 l1 2 l2 -1.5" stroke="#fff" stroke-width="1" fill="none"/>
</svg>

<!-- logo -->
<svg class="abs" style="left:20px;top:504px" width="50" height="12" viewBox="0 0 50 12">
  <path d="M2.6 9.6 L5.4 2.6 L8.2 9.6 L11 2.6 L13 2.6 L13.5 9.8 M13.2 2.6 L17.6 2.6 Q19.6 2.6 19.6 4.4 Q19.6 6.2 17.6 6.2 L14.4 6.2" fill="none" stroke="#f01820" stroke-width="1.9" stroke-linejoin="round" stroke-linecap="round"/>
  <text x="20.6" y="10.1" font-family="Liberation Sans" font-weight="bold" font-size="10.6" fill="#080808" textLength="26.4" lengthAdjust="spacingAndGlyphs">SOFT</text>
</svg>
<div class="abs" style="left:16px;top:519.5px;font-size:6.4px;line-height:7px;color:#e0181c;white-space:nowrap;font-weight:bold">管理软件 美萍是专家</div>
<script>
(function(){
  var probe=document.createElement('span');
  probe.style.cssText='position:absolute;left:-9999px;top:0;font-family:"Liberation Sans",sans-serif;font-size:100px;line-height:1;white-space:nowrap';
  probe.textContent='\u623f\u6e90\u7ba1\u7406';
  document.body.appendChild(probe);
  var w=probe.getBoundingClientRect().width;
  document.body.removeChild(probe);
  if(!(w<370)) return;
  var K=1.333, SW=0, BW=0.45;
  var re=/[\u3000-\u303f\u4e00-\u9fff\uff00-\uffef]+/g;
  var walker=document.createTreeWalker(document.body, NodeFilter.SHOW_TEXT, null);
  var nodes=[], n;
  while((n=walker.nextNode())) { if(re.test(n.nodeValue)) nodes.push(n); re.lastIndex=0; }
  nodes.forEach(function(t){
    var p=t.parentNode; if(!p) return;
    var isSvg = (p instanceof SVGElement);
    var txt=t.nodeValue, frag=document.createDocumentFragment(), last=0, m;
    re.lastIndex=0;
    while((m=re.exec(txt))){
      if(m.index>last) frag.appendChild(document.createTextNode(txt.slice(last,m.index)));
      var sp;
      if(isSvg){ sp=document.createElementNS(p.namespaceURI,'tspan'); sp.setAttribute('style','font-size:'+(K*100)+'%'); }
      else { sp=document.createElement('span'); sp.style.fontSize=(K*100)+'%'; var fw=parseInt(getComputedStyle(p).fontWeight,10)||400; sp.style.webkitTextStroke=(fw>=600?BW:SW)+'px currentColor'; }
      sp.textContent=m[0]; frag.appendChild(sp); last=m.index+m[0].length;
    }
    if(last<txt.length) frag.appendChild(document.createTextNode(txt.slice(last)));
    p.replaceChild(frag,t);
  });
})();
</script>
</body></html>
